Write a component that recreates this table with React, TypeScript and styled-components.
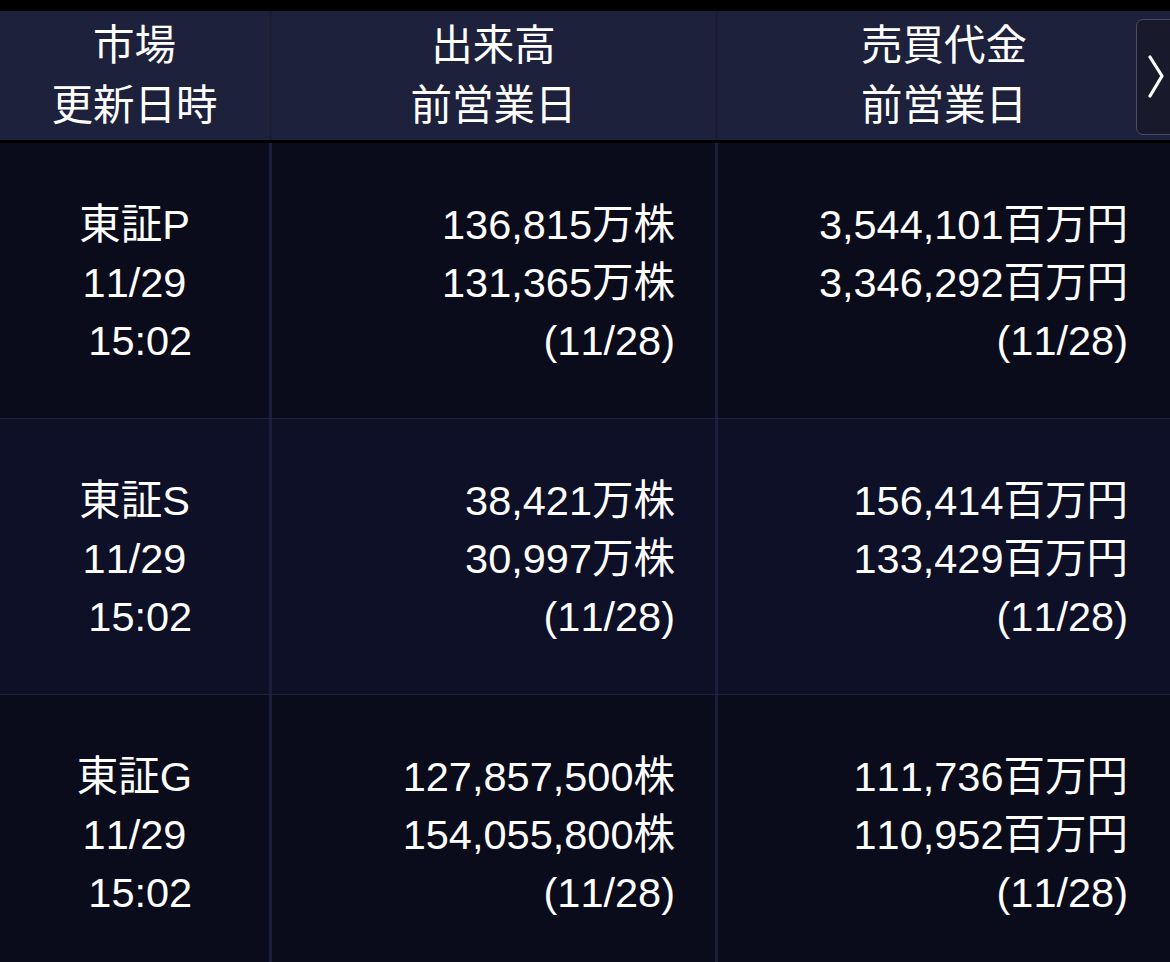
import React from "react";
import styled, { createGlobalStyle } from "styled-components";

const GlobalStyle = createGlobalStyle`
  html, body { margin: 0; padding: 0; background: #0a0c1b; }
  body {
    font-family: "Liberation Sans", "Noto Sans CJK JP", sans-serif;
    color: #ffffff;
    font-kerning: none;
    font-feature-settings: "kern" 0;
    -webkit-font-smoothing: antialiased;
  }
`;

const Page = styled.div`
  width: 1170px;
  height: 962px;
  overflow: hidden;
  background: #0a0c1b;
  display: flex;
  flex-direction: column;
`;

const TopBar = styled.div`
  height: 11px;
  background: #000000;
  flex: none;
`;

const Header = styled.div`
  position: relative;
  display: grid;
  grid-template-columns: 272px 446px 452px;
  height: 129px;
  background: #1e213b;
  border-bottom: 3px solid #000000;
  flex: none;
`;

const HeadCell = styled.div<{ $last?: boolean }>`
  display: flex;
  flex-direction: column;
  align-items: center;
  justify-content: center;
  border-right: ${(p) => (p.$last ? "none" : "3px solid #1a1c34")};
  font-size: 41.5px;
  line-height: 60px;
`;

const NextButton = styled.div`
  position: absolute;
  top: 8px;
  left: 1136px;
  width: 48px;
  height: 116px;
  box-sizing: border-box;
  border: 1.5px solid #4a4c66;
  border-radius: 7px;
  background: #181a2b;
  display: flex;
  align-items: center;
  padding-left: 10px;
`;

const Row = styled.div<{ $alt?: boolean }>`
  display: grid;
  grid-template-columns: 272px 446px 452px;
  height: 276px;
  flex: none;
  box-sizing: border-box;
  background: ${(p) => (p.$alt ? "#0d1026" : "#0a0c1b")};
  border-bottom: 1px solid #1f2240;
`;

const Cell = styled.div<{ $align: "center" | "right"; $pad?: number; $last?: boolean }>`
  display: flex;
  flex-direction: column;
  justify-content: center;
  align-items: ${(p) => (p.$align === "center" ? "center" : "flex-end")};
  padding-right: ${(p) => p.$pad ?? 0}px;
  padding-top: 5px;
  box-sizing: border-box;
  border-right: ${(p) => (p.$last ? "none" : "3px solid #1b1e3a")};
  font-size: 41.5px;
  line-height: 58px;
  white-space: pre;
`;

const Line = styled.span`
  display: block;
`;

type Market = {
  name: string;
  date: string;
  time: string;
  vol: [string, string];
  val: [string, string];
  prev: string;
};

const markets: Market[] = [
  {
    name: "東証P",
    date: "11/29",
    time: " 15:02",
    vol: ["136,815万株", "131,365万株"],
    val: ["3,544,101百万円", "3,346,292百万円"],
    prev: "(11/28)",
  },
  {
    name: "東証S",
    date: "11/29",
    time: " 15:02",
    vol: ["38,421万株", "30,997万株"],
    val: ["156,414百万円", "133,429百万円"],
    prev: "(11/28)",
  },
  {
    name: "東証G",
    date: "11/29",
    time: " 15:02",
    vol: ["127,857,500株", "154,055,800株"],
    val: ["111,736百万円", "110,952百万円"],
    prev: "(11/28)",
  },
];

export default function App() {
  return (
    <Page>
      <GlobalStyle />
      <TopBar />
      <Header>
        <HeadCell>
          <Line>市場</Line>
          <Line>更新日時</Line>
        </HeadCell>
        <HeadCell>
          <Line>出来高</Line>
          <Line>前営業日</Line>
        </HeadCell>
        <HeadCell $last>
          <Line>売買代金</Line>
          <Line>前営業日</Line>
        </HeadCell>
        <NextButton>
          <svg width="18" height="44" viewBox="0 0 18 44">
            <polyline
              points="3,2 15,21 3,41"
              fill="none"
              stroke="#ffffff"
              strokeWidth="3.2"
              strokeLinecap="round"
              strokeLinejoin="round"
            />
          </svg>
        </NextButton>
      </Header>
      {markets.map((m, i) => (
        <Row key={m.name} $alt={i === 1}>
          <Cell $align="center">
            <Line>{m.name}</Line>
            <Line>{m.date}</Line>
            <Line>{m.time}</Line>
          </Cell>
          <Cell $align="right" $pad={40}>
            <Line>{m.vol[0]}</Line>
            <Line>{m.vol[1]}</Line>
            <Line>{m.prev}</Line>
          </Cell>
          <Cell $align="right" $pad={42} $last>
            <Line>{m.val[0]}</Line>
            <Line>{m.val[1]}</Line>
            <Line>{m.prev}</Line>
          </Cell>
        </Row>
      ))}
    </Page>
  );
}
